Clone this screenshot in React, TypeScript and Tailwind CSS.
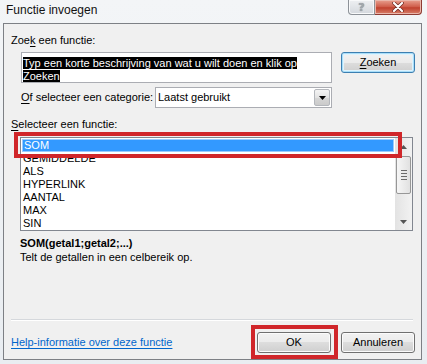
import React from "react";

const functions = ["SOM", "GEMIDDELDE", "ALS", "HYPERLINK", "AANTAL", "MAX", "SIN"];

// classic Windows 7 push button
const WinButton = ({
  children,
  focused = false,
  className = "",
}: {
  children: React.ReactNode;
  focused?: boolean;
  className?: string;
}) => (
  <button
    type="button"
    className={
      "flex h-[21px] w-[74px] items-center justify-center rounded-[3px] border text-[11px] leading-none text-black bg-[linear-gradient(to_bottom,#f2f2f2_0%,#ebebeb_50%,#dddddd_50%,#cfcfcf_100%)] " +
      (focused
        ? "border-[#3c7fb1] shadow-[inset_0_0_0_1px_#a9def9,inset_0_0_0_2px_#dff3fd] "
        : "border-[#707070] shadow-[inset_0_0_0_1px_#fbfbfb] ") +
      className
    }
  >
    {children}
  </button>
);

const Triangle = ({ up = false }: { up?: boolean }) => (
  <svg width="7" height="4" viewBox="0 0 7 4" className="block">
    {up ? <path d="M0 4 L3.5 0 L7 4 Z" fill="#555" /> : <path d="M0 0 L7 0 L3.5 4 Z" fill="#555" />}
  </svg>
);

export default function App() {
  return (
    <div className="relative h-[364px] w-[427px] overflow-hidden bg-[linear-gradient(to_bottom,#f3f5f7,#e9edf1)] font-['Liberation_Sans',Arial,sans-serif] text-[11px] text-black">
      {/* title bar */}
      <div className="flex h-[23px] items-start">
        <span className="ml-[6px] mt-[3px] text-[12px] leading-[15px] text-[#111]">Functie invoegen</span>
        <div className="ml-auto mr-[5px] flex">
          <div className="flex h-[15px] w-[27px] items-center justify-center rounded-bl-[4px] border border-t-0 border-[#8d9298] bg-[linear-gradient(to_bottom,#eef0f2,#d4d8dd)] shadow-[inset_0_0_0_1px_#f8f9fa]">
            <span className="font-['DejaVu_Sans',sans-serif] text-[11px] font-bold leading-none text-[#a3a8ae] [text-shadow:0_0_1px_#6c7278]">?</span>
          </div>
          <div className="flex h-[15px] w-[47px] items-center justify-center rounded-br-[4px] border border-l-0 border-t-0 border-[#8e3b33] bg-[linear-gradient(to_bottom,#e8a08f,#cf5b48_50%,#c0402d_55%,#d8806a)] shadow-[inset_0_0_0_1px_#eab7ab]">
            <svg width="12" height="10" viewBox="0 0 12 10">
              <path d="M2 1 L10 9 M10 1 L2 9" stroke="#6e2a22" strokeWidth="3.6" strokeLinecap="round" />
              <path d="M2 1 L10 9 M10 1 L2 9" stroke="#ffffff" strokeWidth="2.2" strokeLinecap="round" />
            </svg>
          </div>
        </div>
      </div>

      {/* dialog body */}
      <div className="ml-[3px] flex h-[337px] w-[419px] flex-col border border-[#7d8085] bg-[#f0f0f0]">
        <div className="ml-[7px] mt-[9px] leading-[14px]">
          Zoe<span className="underline underline-offset-2">k</span> een functie:
        </div>

        <div className="ml-[17px] mt-[5px] flex items-start">
          <div className="h-[31px] w-[311px] border border-[#abadb3] bg-white pl-[1px] pt-[4px] leading-[13px]">
            <span className="bg-black text-white">Typ een korte beschrijving van wat u wilt doen en klik op</span>
            <br />
            <span className="bg-black text-white">Zoeken</span>
          </div>
          <WinButton focused className="ml-[9px]">
            <span>
              <span className="underline underline-offset-2">Z</span>oeken
            </span>
          </WinButton>
        </div>

        <div className="ml-[17px] mt-[4px] flex items-center">
          <span className="w-[134px]">
            <span className="underline underline-offset-2">O</span>f selecteer een categorie:
          </span>
          <div className="flex h-[21px] w-[177px] items-center border border-[#abadb3] bg-white">
            <span className="flex-1 pl-[2px]">Laatst gebruikt</span>
            <div className="mr-[1px] flex h-[17px] w-[16px] items-center justify-center rounded-[2px] border border-[#b4b7bc] bg-[linear-gradient(to_bottom,#f4f4f4,#e2e2e2_50%,#d6d6d6_50%,#cbcbcb)]">
              <svg width="7" height="4" viewBox="0 0 7 4">
                <path d="M0 0 L7 0 L3.5 4 Z" fill="#000" />
              </svg>
            </div>
          </div>
        </div>

        <div className="ml-[7px] mt-[9px] leading-[14px]">
          <span className="underline underline-offset-2">S</span>electeer een functie:
        </div>

        {/* function list */}
        <div className="relative ml-[16px] mt-[6px] flex h-[94px] w-[393px] border border-[#828790] bg-white">
          <div className="flex-1 pt-[1px]">
            {functions.map((fn, i) => (
              <div
                key={fn}
                className={
                  "h-[13px] pl-[2px] leading-[13px] " +
                  (i === 0 ? "mx-[1px] bg-[#3399ff] pl-[1px] text-white outline outline-1 -outline-offset-1 outline-[#99ccff]" : "")
                }
              >
                {fn}
              </div>
            ))}
          </div>
          <div className="flex w-[17px] flex-col items-center bg-[linear-gradient(to_right,#e3e3e3,#f2f2f2)]">
            <div className="flex h-[17px] items-center">
              <Triangle up />
            </div>
            <div className="mt-[1px] flex h-[38px] w-[15px] flex-col items-center justify-center gap-[2px] rounded-[2px] border border-[#979797] bg-[linear-gradient(to_right,#f6f6f6,#e1e1e1)]">
              <div className="h-px w-[6px] bg-[#6b6b6b]" />
              <div className="h-px w-[6px] bg-[#6b6b6b]" />
              <div className="h-px w-[6px] bg-[#6b6b6b]" />
              <div className="h-px w-[6px] bg-[#6b6b6b]" />
            </div>
            <div className="mt-auto flex h-[17px] items-center">
              <Triangle />
            </div>
          </div>
          {/* red highlight */}
          <div className="pointer-events-none absolute -left-[7px] -top-[6px] h-[26px] w-[388px] border-4 border-[#d0262a]" />
        </div>

        <div className="ml-[16px] mt-[5px] font-bold leading-[14px]">SOM(getal1;getal2;...)</div>
        <div className="ml-[16px] leading-[14px]">Telt de getallen in een celbereik op.</div>

        <div className="ml-[7px] mt-[55px] h-[2px] w-[402px] border-t border-[#d5d8dc] border-b-white border-b" />

        <div className="mt-[11px] flex items-center">
          <span className="ml-[7px] text-[#0066cc] underline underline-offset-2">Help-informatie over deze functie</span>
          <div className="relative ml-auto">
            <WinButton>OK</WinButton>
            <div className="pointer-events-none absolute -left-[6px] -top-[7px] h-[34px] w-[87px] border-4 border-[#d0262a]" />
          </div>
          <WinButton className="ml-[10px] mr-[6px]">Annuleren</WinButton>
        </div>
      </div>
    </div>
  );
}
